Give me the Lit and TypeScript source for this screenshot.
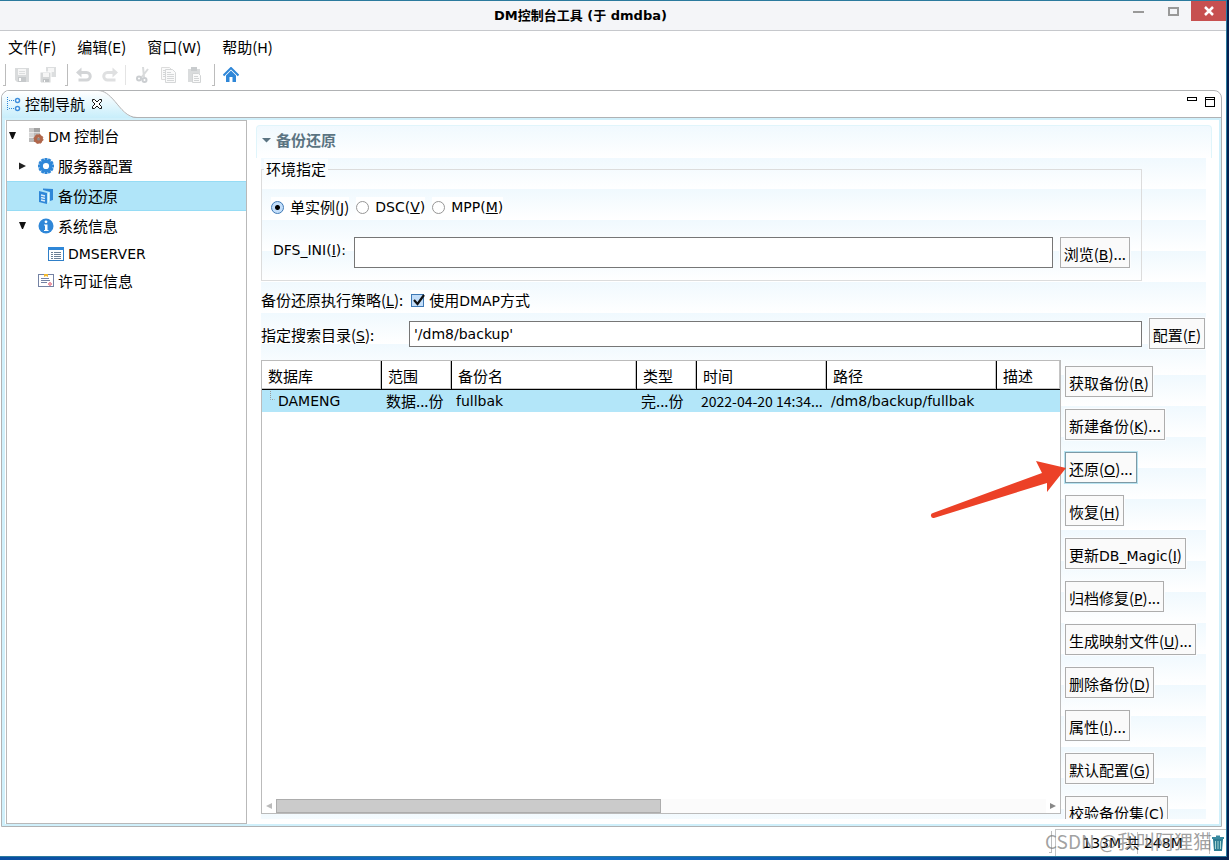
import { LitElement, html, css, svg, nothing } from "lit";
import { customElement, state } from "lit/decorators.js";

type Label = { text: string; key?: string; tail?: string };

// Latin runs inside Chinese labels use the Latin face; punctuation stays in the Chinese one.
const mix = (text: string) =>
  text.split(/([A-Za-z0-9_]+)/).map((part, i) => (i % 2 ? html`<span class="l">${part}</span>` : part));

const label = (l: Label) =>
  html`${mix(l.text)}${l.key ? html`(<u class="l">${l.key}</u>)` : nothing}${l.tail ?? nothing}`;

const icon = (w: number, h: number, body: unknown) =>
  html`<svg class="icon" width=${w} height=${h} viewBox="0 0 ${w} ${h}" aria-hidden="true">${body}</svg>`;

const gearTeeth = [0, 30, 60, 90, 120, 150, 180, 210, 240, 270, 300, 330];

const icons = {
  save: icon(16, 16, svg`
    <path d="M1 1h14v14h-12l-2-2z" fill="#d9dbdc"/>
    <rect x="4" y="2" width="8" height="6" fill="#f6f6f6"/>
    <path d="M5 4.500h6M5 6.500h6" stroke="#dcdedf"/>
    <rect x="4" y="10" width="8" height="5" fill="#c6c9cb"/>
    <rect x="5" y="11" width="2" height="3" fill="#fff"/>`),
  saveAll: icon(16, 16, svg`
    <path d="M6 0h10v10h-10z" fill="#dcdedf"/><rect x="8" y="1" width="6" height="4" fill="#f6f6f6"/>
    <path d="M0 5h11v11h-10l-1-1z" fill="#d5d7d8" stroke="#fff"/>
    <rect x="3" y="6" width="6" height="4" fill="#f6f6f6"/>
    <rect x="3" y="12" width="6" height="3" fill="#c0c3c5"/><rect x="4" y="13" width="1" height="2" fill="#fff"/>`),
  undo: icon(16, 16, svg`
    <path d="M3 5.500h7.500a3.500 3.500 0 0 1 0 7.500h-8" fill="none" stroke="#d3d5d7" stroke-width="3"/>
    <path d="M0 5.500l5.500-5v10z" fill="#d3d5d7"/>`),
  redo: icon(16, 16, svg`
    <path d="M13 5.500h-7.500a3.500 3.500 0 0 0 0 7.500h8" fill="none" stroke="#dfe0e1" stroke-width="3"/>
    <path d="M16 5.500l-5.500-5v10z" fill="#dfe0e1"/>`),
  cut: icon(16, 16, svg`
    <path d="M8 0l1 10M13 2l-7 9" stroke="#d9dbdc" stroke-width="2"/>
    <circle cx="4" cy="11.500" r="2" fill="none" stroke="#cbced1" stroke-width="2"/>
    <circle cx="9.500" cy="13" r="2" fill="none" stroke="#cbced1" stroke-width="2"/>`),
  copy: icon(16, 16, svg`
    <path d="M0.500 0.500h8l2 2v10h-10z" fill="#fafafa" stroke="#dcdcdc"/>
    <path d="M4.500 2.500h7l3 3v10h-10z" fill="#fafafa" stroke="#d5d7d8"/>
    <path d="M2 3.500h2M2 5.500h2M2 7.500h2M2 9.500h2M6 5.500h4M6 7.500h7M6 9.500h7M6 11.500h7M6 13.500h7" stroke="#d5d7d8"/>`),
  paste: icon(16, 16, svg`
    <rect x="1" y="2" width="12" height="13" fill="#dadcdd"/>
    <rect x="4" y="0" width="6" height="4" fill="#c9ccce"/>
    <path d="M5.500 6.500h6l2 2v7h-8z" fill="#fafafa" stroke="#d2d4d5"/>
    <path d="M7 9.500h4M7 11.500h5M7 13.500h5" stroke="#d2d4d5"/>`),
  home: icon(16, 16, svg`
    <path d="M0.500 8.500L8 1l7.500 7.500" fill="none" stroke="#2f87d8" stroke-width="2"/>
    <path d="M3 8.500l5-5 5 5v6.500h-3.500v-5h-3v5h-3.500z" fill="#2f87d8"/>`),
  nav: icon(14, 16, svg`
    <path d="M0.500 1v13M2 4.500h6M2 12.500h6" fill="none" stroke="#2f87d8" stroke-dasharray="1 1"/>
    <circle cx="10.500" cy="4.500" r="2" fill="#fff" stroke="#3e8fdc" stroke-width="1.500"/>
    <circle cx="10.500" cy="12.500" r="2" fill="#fff" stroke="#3e8fdc" stroke-width="1.500"/>`),
  close: icon(12, 12, svg`
    <path d="M1.500 1.500h2l2.500 2.500 2.500-2.500h2v2l-2.500 2.500 2.500 2.500v2h-2l-2.500-2.500-2.500 2.500h-2v-2l2.500-2.500-2.500-2.500z" fill="#fff" stroke="#111"/>`),
  server: icon(16, 16, svg`
    <rect x="1" y="0" width="11" height="4" fill="#a3a3a3"/><rect x="1" y="4" width="11" height="1" fill="#ddd"/>
    <rect x="1" y="5" width="11" height="4" fill="#b9b9b9"/><rect x="1" y="9" width="11" height="1" fill="#ddd"/>
    <rect x="1" y="10" width="11" height="4" fill="#8d8d8d"/><path d="M1 0h5v14h-5z" fill="#fff" opacity=".4"/>
    <circle cx="10.500" cy="11" r="3" fill="none" stroke="#b0664a" stroke-width="3"/>
    <circle cx="10.500" cy="11" r="4.500" fill="none" stroke="#b0664a" stroke-dasharray="2 1.500"/>`),
  gear: icon(16, 16, svg`
    ${gearTeeth.map((a) => svg`<rect x="6.500" y="0" width="3" height="4" fill="#2f87d8" transform="rotate(${a} 8 8)"/>`)}
    <circle cx="8" cy="8" r="4.800" fill="#fff" stroke="#2f87d8" stroke-width="3.400"/>`),
  backup: icon(16, 16, svg`
    <path d="M5 0.500l10 0.500v11l-3 1v-9l-7-2z" fill="#2f87d8"/>
    <path d="M1 3l8 2v11l-8-2z" fill="#2f87d8"/>
    <path d="M3 7l4 1M3 9.500l4 1M3 12l4 1" stroke="#d8ecfa" stroke-width="1.300"/>
    <path d="M10.500 4.500v10" stroke="#e6f6fd"/>`),
  info: icon(16, 16, svg`
    <circle cx="8" cy="8" r="7.500" fill="#2f87d8"/><circle cx="8" cy="3.800" r="1.400" fill="#fff"/>
    <path d="M6 6.500h3.500v5.500h1v1h-4.500v-1h1v-4.500h-1z" fill="#fff"/>`),
  list: icon(16, 14, svg`
    <rect x="0.500" y="0.500" width="15" height="13" fill="#fff" stroke="#2f7fc8"/>
    <rect x="0" y="0" width="16" height="3" fill="#2f87d8"/>
    <path d="M3 5.500h2M3 7.500h2M3 9.500h2M3 11.500h2M6 5.500h7M6 7.500h7M6 9.500h7M6 11.500h7" stroke="#6b7f95"/>`),
  licence: icon(16, 14, svg`
    <rect x="0.500" y="0.500" width="15" height="12" fill="#fff" stroke="#7482a4"/>
    <path d="M6 0h4v3l-2-1-2 1z" fill="#f2b92f"/>
    <path d="M3 4.500h8M3 6.500h9M3 8.500h6" stroke="#7482a4"/>
    <circle cx="12" cy="10" r="1.300" fill="#fff" stroke="#e0566b"/>`),
  trash: icon(12, 16, svg`
    <path d="M1 4h10l-1 12h-8z" fill="#2c7d93"/><path d="M0 2h12v2h-12z" fill="#3a8aa0"/>
    <path d="M4 0.500h4v1.500h-4z" fill="#3a8aa0"/><path d="M3.500 6v8M6 6v8M8.500 6v8" stroke="#a7d5d2"/>`),
};

@customElement("app-root")
export class AppRoot extends LitElement {
  @state() private mode = "single";

  static styles = css`
    :host {
      display: block;
      font: 15px/20px "Noto Sans CJK SC", sans-serif;
      color: #000;
    }
    * { box-sizing: border-box; }
    button, input { font: inherit; color: inherit; margin: 0; }
    .icon { display: block; flex: none; }
    .l, .latin { font-family: "DejaVu Sans", sans-serif; font-size: 14px; }
    .l { line-height: 1; }
    .desktop {
      height: 100vh;
      background: linear-gradient(90deg, #0a4da0, #1676cc 45%, #0b58b0 70%, #04204f);
      padding: 0 2px 3px 0;
    }
    .window {
      height: 100%;
      display: flex;
      flex-direction: column;
      background: #fff;
      border: solid #2b7a9e;
      border-width: 1px 1px 1px 0;
    }
    .titlebar {
      display: flex;
      background: #f4f5f8;
      height: 30px;
      flex: none;
      border-bottom: 1px solid #c6c8cc;
    }
    .title {
      flex: 1;
      margin: 0;
      padding-left: 40px;
      text-align: center;
      font: bold 13px/30px "DejaVu Sans", "Noto Sans CJK SC", sans-serif;
    }
    .winbtn {
      width: 35px;
      height: 20px;
      border: 0;
      padding: 0;
      background: none;
      display: grid;
      place-items: center;
    }
    .winbtn.close { background: #c75050; }
    .menu {
      display: flex;
      align-items: center;
      gap: 21px;
      height: 31px;
      padding: 0 8px;
      flex: none;
    }
    .menu button, .toolbar button, .tab button, .paneops button {
      border: 0;
      padding: 0;
      background: none;
      white-space: nowrap;
    }
    .toolbar {
      display: flex;
      align-items: center;
      gap: 10px;
      height: 28px;
      padding: 0 3px 2px;
      flex: none;
    }
    .grip {
      width: 3px;
      height: 22px;
      border: solid #bcbcbc;
      border-width: 0 1px 1px 0;
      margin: 0 -2px 0 -1px;
    }
    .grip:first-child { margin-left: 0; }
    .rule { width: 1px; height: 20px; background: #e4e4e4; margin: 0 -1px 0 -3px; }
    .view {
      flex: 1;
      min-height: 0;
      margin: 0 4px 0 1px;
      display: flex;
      flex-direction: column;
      border: 1px solid #b0b2b4;
      border-radius: 8px 8px 0 0;
    }
    .strip { display: flex; height: 27px; flex: none; }
    .tabshape { position: absolute; left: 0; top: -1px; z-index: -1; }
    .tab {
      position: relative;
      isolation: isolate;
      display: flex;
      align-items: center;
      flex: 1;
      gap: 4px;
      padding-left: 5px;
      border-bottom: 1px solid #b0b2b4;
    }
    .tab button { margin-left: 2px; }
    .paneops {
      display: flex;
      align-items: flex-start;
      gap: 8px;
      padding: 6px 6px 0 0;
      border-bottom: 1px solid #b0b2b4;
    }
    .body {
      flex: 1;
      min-height: 0;
      display: flex;
      border: solid #d0f0fb;
      border-width: 2px 2px 2px 3px;
    }
    .tree {
      width: 241px;
      flex: none;
      margin: 0 9px 0 1px;
      border: 1px solid #b9b9b9;
    }
    .node {
      display: flex;
      align-items: center;
      height: 30px;
      gap: 4px;
      border: solid transparent;
      border-width: 1px 0;
    }
    .node.short { height: 25px; }
    .node.on { background: #b0e5f9; border-color: #96dcf5; }
    .twist { width: 9px; flex: none; }
    .d0 .twist, .d1 .twist { margin-right: 7px; }
    .d0 { padding-left: 1px; }
    .d1 { padding-left: 11px; }
    .d2 { padding-left: 41px; }
    .form {
      flex: 1;
      min-width: 0;
      margin: 5px 7px 5px 0;
      display: flex;
      flex-direction: column;
    }
    .section {
      margin: 0;
      height: 33px;
      flex: none;
      display: flex;
      align-items: center;
      gap: 5px;
      padding: 0 0 4px 5px;
      border: 1px solid #e0f5fb;
      border-bottom: 0;
      border-radius: 4px 4px 0 0;
      background: linear-gradient(#f0f9fe, #fff);
      color: #5b7482;
      font-size: 15px;
      font-weight: bold;
      line-height: 20px;
    }
    .client {
      flex: 1;
      min-height: 0;
      overflow: hidden;
      margin: 0 6px 0 5px;
      background: repeating-linear-gradient(#f0f9fe, #fff 31px);
      display: flex;
      flex-direction: column;
    }
    .group {
      position: relative;
      margin: 11px 64px 0 0;
      padding: 26px 11px 12px 9px;
      border: 1px solid #dcdcdc;
      flex: none;
      min-width: 0;
    }
    .legend { position: absolute; left: 2px; top: -11px; padding: 0 2px; background: #fafdff; }
    .radios { display: flex; gap: 7px; height: 22px; align-items: center; }
    .radios label { display: flex; align-items: center; gap: 6px; background: #fff; }
    .radios input {
      appearance: none;
      width: 13px;
      height: 13px;
      border: 1px solid #969696;
      border-radius: 50%;
      background: #fff;
    }
    .radios input:checked {
      border-color: #3f79b5;
      background: radial-gradient(circle, #000 2px, #c3defa 3px);
    }
    .ini { display: flex; align-items: center; margin-top: 19px; }
    .ini label { width: 83px; padding-left: 2px; flex: none; margin-bottom: 6px; }
    input.text {
      flex: 1;
      min-width: 0;
      margin-right: 7px;
      border: 1px solid #767676;
      border-radius: 0;
      background: #fff;
      padding: 0 4px;
      outline: none;
    }
    .ini input.text { height: 31px; }
    .btn {
      height: 31px;
      padding: 2px 3px 0;
      border: 1px solid #adadad;
      background: #fafafa;
      box-shadow: 0 0 0 1px #fbfdff;
      white-space: nowrap;
      flex: none;
    }
    .btn.focus { border-color: #7d99a5; box-shadow: 0 0 0 1px #b8e3f1; }
    .strategy { display: flex; align-items: center; margin-top: 7px; height: 24px; flex: none; }
    .strategy label { display: flex; align-items: center; gap: 5px; background: #fff; }
    .strategy .cap { margin-right: 8px; }
    .check { position: relative; display: grid; place-items: center; }
    .check input { appearance: none; width: 13px; height: 13px; border: 1px solid #3f79b5; background: #c3defa; }
    .check svg { position: absolute; left: 0; top: -1px; pointer-events: none; }
    .search { display: flex; align-items: center; margin-top: 6px; height: 31px; flex: none; }
    .search label { width: 148px; flex: none; padding-top: 2px; }
    .search input.text { height: 26px; }
    .search .btn { margin-right: 1px; }
    .main { position: relative; flex: 1; min-height: 0; display: flex; margin-top: 11px; gap: 4px; }
    .grid {
      flex: 1;
      min-width: 0;
      margin-bottom: 5px;
      background: #fff;
      border: 1px solid #bbb;
      display: flex;
      flex-direction: column;
      overflow: hidden;
    }
    .scroll { flex: 1; overflow: hidden; }
    table { width: 100%; border-collapse: separate; border-spacing: 0; table-layout: fixed; }
    th, td { text-align: left; font-weight: normal; white-space: nowrap; overflow: hidden; }
    th {
      height: 29px;
      padding: 2px 0 0 6px;
      border-bottom: 1px solid #000;
      border-right: 1px solid #000;
      box-shadow: inset -1px -1px #c4c4c4;
    }
    th:last-child { border-right: 0; }
    td { height: 22px; padding: 0 0 0 4px; background: #b3e6f9; line-height: 22px; vertical-align: middle; }
    td.first { padding-left: 7px; }
    td .leaf { display: flex; gap: 3px; }
    td.time { font-size: 14px; }
    .w120 { width: 120px; }
    .w70 { width: 70px; }
    .w185 { width: 185px; }
    .w60 { width: 60px; }
    .w130 { width: 130px; }
    .w170 { width: 170px; }
    .hbar { display: flex; align-items: center; height: 15px; flex: none; padding: 0 4px; gap: 4px; }
    .track { flex: 1; height: 14px; background: #fbfbfb; }
    .thumb { width: 50%; height: 14px; background: #cbcbcb; border: 1px solid #acacac; }
    .actions {
      width: 142px;
      flex: none;
      display: flex;
      flex-direction: column;
      align-items: flex-start;
      gap: 12px;
      padding: 6px 0 0 1px;
      margin-left: -1px;
      overflow: hidden;
    }
    .arrow { position: absolute; right: 140px; top: 93px; pointer-events: none; }
    .status {
      position: relative;
      flex: none;
      height: 29px;
      display: flex;
      justify-content: flex-end;
      gap: 3px;
      padding-top: 2px;
    }
    .status .grip { margin: 2px 0 0; }
    .heap {
      display: flex;
      align-items: center;
      width: 171px;
      border: solid #c4c4c4;
      border-width: 1px 0 0 1px;
      gap: 2px;
    }
    .mem {
      flex: 1;
      text-align: center;
      font: 14px/22px "DejaVu Sans", "Noto Sans CJK SC", sans-serif;
      border-right: 1px solid #c4c4c4;
      background: linear-gradient(#c4c4c4, #c4c4c4) 53% 0 / 1px 100% no-repeat;
    }
    .heap .icon { margin-right: 2px; }
    .mark {
      position: absolute;
      right: 14px;
      top: 1px;
      font: 19px/26px "Noto Sans CJK SC", sans-serif;
      color: rgba(120, 120, 120, 0.7);
      white-space: nowrap;
    }
  `;

  private down(big = false) {
    return html`<svg class="twist" width="9" height="8" viewBox="0 0 9 8" aria-hidden="true">
      <path d=${big ? "M0 2h9l-4.500 4.500z" : "M1 0h7l-3 7h-1z"} fill=${big ? "#5b7482" : "#111"} /></svg>`;
  }

  private node(depth: number, twist: string, pic: unknown, text: string, cls = "") {
    return html`<div class="node d${depth} ${cls}" role="treeitem" aria-selected=${cls === "on"}>
      ${depth === 2 ? nothing : twist === "open" ? this.down() : twist === "shut"
        ? html`<svg class="twist" width="9" height="8" viewBox="0 0 9 8" aria-hidden="true"><path d="M1 0.500l7 3.500-7 3.500z" fill="#222"/></svg>`
        : html`<span class="twist"></span>`}
      ${pic}<span>${mix(text)}</span>
    </div>`;
  }

  private radio(value: string, l: Label, cls = "") {
    return html`<label class=${cls}>
      <input type="radio" name="mode" .checked=${this.mode === value} @change=${() => (this.mode = value)} />
      <span>${label(l)}</span>
    </label>`;
  }

  render() {
    const actions: Label[] = [
      { text: "获取备份", key: "R" },
      { text: "新建备份", key: "K", tail: "..." },
      { text: "还原", key: "O", tail: "..." },
      { text: "恢复", key: "H" },
      { text: "更新DB_Magic", key: "I" },
      { text: "归档修复", key: "P", tail: "..." },
      { text: "生成映射文件", key: "U", tail: "..." },
      { text: "删除备份", key: "D" },
      { text: "属性", key: "I", tail: "..." },
      { text: "默认配置", key: "G" },
      { text: "校验备份集", key: "C" },
    ];
    return html`<div class="desktop"><div class="window">
      <header class="titlebar">
        <h1 class="title">DM控制台工具 (于 dmdba)</h1>
        <button class="winbtn" aria-label="最小化">${icon(11, 10, svg`<path d="M0 6h11" stroke="#999" stroke-width="2"/>`)}</button>
        <button class="winbtn" aria-label="最大化">${icon(11, 10, svg`<rect x="1" y="2" width="9" height="7" fill="none" stroke="#999" stroke-width="2"/>`)}</button>
        <button class="winbtn close" aria-label="关闭">${icon(10, 10, svg`<path d="M1 1l8 8M9 1l-8 8" stroke="#fff" stroke-width="2.500"/>`)}</button>
      </header>
      <nav class="menu">
        ${["文件(F)", "编辑(E)", "窗口(W)", "帮助(H)"].map((m) => html`<button>${mix(m)}</button>`)}
      </nav>
      <div class="toolbar">
        <span class="grip"></span>
        <button aria-label="保存">${icons.save}</button>
        <button aria-label="全部保存">${icons.saveAll}</button>
        <span class="grip"></span>
        <button aria-label="撤销">${icons.undo}</button>
        <button aria-label="重做">${icons.redo}</button>
        <span class="rule"></span>
        <button aria-label="剪切">${icons.cut}</button>
        <button aria-label="复制">${icons.copy}</button>
        <button aria-label="粘贴">${icons.paste}</button>
        <span class="grip"></span>
        <button aria-label="主页">${icons.home}</button>
      </div>
      <section class="view">
        <div class="strip">
          <div class="tab">
            <svg class="tabshape" width="145" height="28" viewBox="0 0 145 28" aria-hidden="true">
              <defs><linearGradient id="g" x1="0" y1="0" x2="0" y2="1"><stop offset="0" stop-color="#fff"/><stop offset="1" stop-color="#c8eefb"/></linearGradient></defs>
              <path d="M0 28V6L5 1H96c6 0 11 4 17 11s12 16 22 16z" fill="url(#g)"/>
              <path d="M96 0.500c6 0 11 4 17 11s12 16 22 16" fill="none" stroke="#b0b2b4"/>
            </svg>
            ${icons.nav}<span>控制导航</span><button aria-label="关闭标签">${icons.close}</button>
          </div>
          <div class="paneops">
            <button aria-label="最小化视图">${icon(10, 10, svg`<rect x="0.500" y="0.500" width="9" height="3" fill="#fff" stroke="#000"/>`)}</button>
            <button aria-label="最大化视图">${icon(10, 10, svg`<rect x="0.500" y="0.500" width="9" height="9" fill="#fff" stroke="#000"/><path d="M0 2.500h10" stroke="#000"/>`)}</button>
          </div>
        </div>
        <div class="body">
          <div class="tree" role="tree">
            ${this.node(0, "open", icons.server, "DM 控制台")}
            ${this.node(1, "shut", icons.gear, "服务器配置")}
            ${this.node(1, "", icons.backup, "备份还原", "on")}
            ${this.node(1, "open", icons.info, "系统信息")}
            ${this.node(2, "", icons.list, "DMSERVER", "short latin")}
            ${this.node(1, "", icons.licence, "许可证信息")}
          </div>
          <main class="form">
            <h2 class="section">${this.down(true)}备份还原</h2>
            <div class="client">
              <div class="group" role="group" aria-labelledby="env">
                <span class="legend" id="env">环境指定</span>
                <div class="radios">
                  ${this.radio("single", { text: "单实例", key: "J" })}
                  ${this.radio("dsc", { text: "DSC", key: "V" }, "latin")}
                  ${this.radio("mpp", { text: "MPP", key: "M" }, "latin")}
                </div>
                <div class="ini">
                  <label for="ini" class="latin">DFS_INI(<u>I</u>):</label>
                  <input class="text" id="ini" type="text" />
                  <button class="btn">${label({ text: "浏览", key: "B", tail: "..." })}</button>
                </div>
              </div>
              <div class="strategy">
                <span class="cap">${label({ text: "备份还原执行策略", key: "L", tail: ":" })}</span>
                <label><span class="check"><input type="checkbox" checked />
                  <svg width="15" height="14" viewBox="0 0 15 14" aria-hidden="true"><path d="M3 7l3.500 4 6.500-9" fill="none" stroke="#111" stroke-width="2.200"/></svg></span>
                  <span>${mix("使用DMAP方式")}</span></label>
              </div>
              <div class="search">
                <label for="dir">${label({ text: "指定搜索目录", key: "S", tail: ":" })}</label>
                <input class="text latin" id="dir" type="text" value="'/dm8/backup'" />
                <button class="btn">${label({ text: "配置", key: "F" })}</button>
              </div>
              <div class="main">
                <div class="grid">
                  <div class="scroll">
                    <table>
                      <colgroup><col class="w120" /><col class="w70" /><col class="w185" /><col class="w60" /><col class="w130" /><col class="w170" /><col /></colgroup>
                      <thead><tr>${["数据库", "范围", "备份名", "类型", "时间", "路径", "描述"].map((h) => html`<th>${h}</th>`)}</tr></thead>
                      <tbody><tr>
                        <td class="first latin"><span class="leaf"><svg width="6" height="12" viewBox="0 0 6 12" aria-hidden="true"><path d="M1.500 1v8.500h4" fill="none" stroke="#999" stroke-dasharray="1 1"/></svg>DAMENG</span></td>
                        <td>数据...份</td><td class="latin">fullbak</td><td>完...份</td>
                        <td class="time">2022-04-20 14:34...</td><td class="latin">/dm8/backup/fullbak</td><td></td>
                      </tr></tbody>
                    </table>
                  </div>
                  <div class="hbar">
                    <svg width="6" height="8" viewBox="0 0 6 8" aria-hidden="true"><path d="M6 1v6l-6-3z" fill="#bbb"/></svg>
                    <div class="track"><div class="thumb"></div></div>
                    <svg width="6" height="8" viewBox="0 0 6 8" aria-hidden="true"><path d="M0 1v6l6-3z" fill="#888"/></svg>
                  </div>
                </div>
                <div class="actions">
                  ${actions.map((a) => html`<button class="btn ${a.key === "O" ? "focus" : ""}">${label(a)}</button>`)}
                </div>
                <svg class="arrow" width="136" height="66" viewBox="0 0 136 66" aria-hidden="true">
                  <path d="M3 60L112 20l-6-12 30 7-19 24v-9L4 65a2.500 2.500 0 0 1-1-5z" fill="#ec4127"/>
                </svg>
              </div>
            </div>
          </main>
        </div>
      </section>
      <footer class="status">
        <span class="grip"></span>
        <div class="heap"><span class="mem">133M 共 248M</span>${icons.trash}</div>
        <span class="mark">CSDN @我叫阿狸猫</span>
      </footer>
    </div></div>`;
  }
}
